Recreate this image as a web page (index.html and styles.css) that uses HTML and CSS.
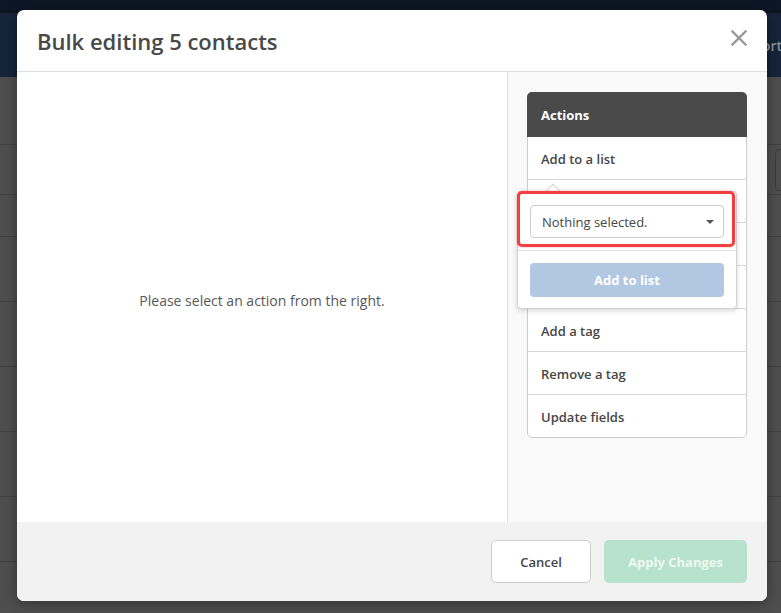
FILE: index.html
```html
<!DOCTYPE html>
<html lang="en">
<head>
<meta charset="utf-8">
<title>Bulk editing 5 contacts</title>
<link rel="stylesheet" href="styles.css">
</head>
<body>
<div class="app">
  <div class="topstrip"></div>
  <div class="topbar"><span class="top-btn">Export</span></div>
  <div class="bg-row h68"></div>
  <div class="bg-row h50"><span class="bg-input"></span></div>
  <div class="bg-row h42"></div>
  <div class="bg-row"></div>
  <div class="bg-row"></div>
  <div class="bg-row"></div>
  <div class="bg-row"></div>
  <div class="bg-row"></div>
</div>

<div class="modal">
  <div class="modal-header">
    <h1 class="modal-title">Bulk editing 5 contacts</h1>
    <button class="close" aria-label="Close">
      <svg width="16" height="16" viewBox="0 0 16 16"><path d="M1.5 1.5 L14.5 14.5 M14.5 1.5 L1.5 14.5" stroke="#9a9a9a" stroke-width="2.4" stroke-linecap="square" fill="none"/></svg>
    </button>
  </div>
  <div class="modal-body">
    <div class="main-pane">
      <p class="hint">Please select an action from the right.</p>
    </div>
    <div class="side-pane">
      <div class="actions">
        <div class="actions-head">Actions</div>
        <div class="action">Add to a list</div>
        <div class="action covered">Remove from a list</div>
        <div class="action covered">Subscribe</div>
        <div class="action covered">Unsubscribe</div>
        <div class="action">Add a tag</div>
        <div class="action">Remove a tag</div>
        <div class="action last">Update fields</div>

        <div class="popover">
          <span class="arrow"></span>
          <div class="pop-section top">
            <div class="select">
              <span>Nothing selected.</span>
              <span class="caret"></span>
            </div>
          </div>
          <div class="pop-section bottom">
            <button class="btn-add">Add to list</button>
          </div>
          <div class="highlight"></div>
        </div>
      </div>
    </div>
  </div>
  <div class="modal-footer">
    <button class="btn btn-cancel">Cancel</button>
    <button class="btn btn-apply">Apply Changes</button>
  </div>
</div>
</body>
</html>
```

FILE: styles.css
```css
html, body {
  margin: 0;
  padding: 0;
  width: 781px;
  height: 613px;
  overflow: hidden;
  background: #4e4e4e;
  font-family: "Open Sans", "Liberation Sans", sans-serif;
}

.app {
  display: flex;
  flex-direction: column;
}

.topstrip {
  height: 13px;
  background: #0d1624;
}

.topbar {
  height: 64px;
  background: #15243a;
  display: flex;
  justify-content: flex-end;
  align-items: center;
  overflow: hidden;
}

.top-btn {
  color: #8b929b;
  font-size: 14px;
  font-weight: 600;
  margin-right: -1px;
  margin-top: 0;
}

.bg-row {
  height: 64px;
  border-bottom: 1px solid #424242;
  display: flex;
  justify-content: flex-end;
  align-items: center;
}

.bg-row.h68 { height: 67px; }
.bg-row.h50 { height: 49px; }
.bg-row.h42 { height: 41px; }

.bg-input {
  width: 40px;
  height: 42px;
  border: 1px solid #3c3c3c;
  border-radius: 4px;
  margin-right: -34px;
  box-sizing: border-box;
}

/* Modal (overlay) */
.modal {
  position: absolute;
  left: 17px;
  top: 10px;
  width: 750px;
  height: 591px;
  background: #fff;
  border-radius: 7px;
  box-shadow: 0 3px 14px rgba(0, 0, 0, 0.35);
  display: flex;
  flex-direction: column;
  overflow: hidden;
}

.modal-header {
  display: flex;
  justify-content: space-between;
  align-items: flex-start;
  padding: 17px 20px 16px 20px;
  border-bottom: 1px solid #dedede;
}

.modal-title {
  margin: 0;
  font-size: 22px;
  line-height: 28px;
  font-weight: 600;
  color: #484848;
}

.close {
  border: 0;
  background: none;
  padding: 0;
  margin-top: 3px;
  width: 16px;
  height: 16px;
  display: block;
}

.close svg { display: block; }

.modal-body {
  flex: 1;
  display: flex;
  min-height: 0;
}

.main-pane {
  flex: 1;
  display: flex;
  align-items: center;
  justify-content: center;
  padding-top: 6px;
}

.hint {
  margin: 0;
  font-size: 14px;
  color: #585858;
}

.side-pane {
  width: 220px;
  border-left: 1px solid #dedede;
  background: #f9f9f9;
  padding: 20px 20px 0 19px;
}

.actions {
  position: relative;
  border: 1px solid #cdcdcd;
  border-radius: 5px;
  background: #fff;
}

.actions-head {
  height: 45px;
  margin: -1px -1px 0 -1px;
  padding: 0 14px;
  background: #4a4a4a;
  color: #fff;
  font-size: 13px;
  font-weight: 700;
  line-height: 46px;
  border-radius: 5px 5px 0 0;
}

.action {
  height: 42px;
  line-height: 44px;
  padding: 0 13px;
  border-bottom: 1px solid #d6d6d6;
  font-size: 13px;
  font-weight: 600;
  color: #464646;
  overflow: hidden;
}

.action.last { border-bottom: 0; }

/* Popover */
.popover {
  position: absolute;
  left: -11px;
  top: 98px;
  width: 218px;
  background: #fff;
  border: 1px solid #d0d0d0;
  border-radius: 4px;
  box-shadow: 0 2px 5px rgba(0, 0, 0, 0.15);
}

.arrow {
  position: absolute;
  left: 29px;
  top: -6px;
  width: 11px;
  height: 11px;
  background: #fff;
  border-left: 1px solid #d0d0d0;
  border-top: 1px solid #d0d0d0;
  transform: rotate(45deg);
}

.pop-section.top {
  position: relative;
  padding: 13px 12px 12px 12px;
  border-bottom: 1px solid #e3e3e3;
  background: #fff;
  border-radius: 4px 4px 0 0;
}

.pop-section.bottom {
  padding: 12px 12px 11px 12px;
}

.select {
  height: 31px;
  border: 1px solid #cccccc;
  border-radius: 4px;
  display: flex;
  align-items: center;
  justify-content: space-between;
  padding: 0 9px 0 11px;
  font-size: 13px;
  color: #454545;
}

.caret {
  width: 0;
  height: 0;
  border-left: 4px solid transparent;
  border-right: 4px solid transparent;
  border-top: 4px solid #555;
}

.btn-add {
  display: block;
  width: 100%;
  height: 34px;
  border: 0;
  border-radius: 4px;
  background: #b2c7e1;
  color: #fff;
  font-family: inherit;
  font-size: 13px;
  font-weight: 700;
}

.highlight {
  position: absolute;
  left: -1px;
  top: -1px;
  width: 212px;
  height: 50px;
  border: 3px solid #f1403f;
  border-radius: 5px;
  box-shadow: 0 0 2px rgba(241, 64, 63, 0.5);
}

/* Footer */
.modal-footer {
  height: 79px;
  background: #f2f2f2;
  display: flex;
  justify-content: flex-end;
  align-items: center;
  gap: 13px;
  padding: 0 20px;
}

.btn {
  height: 43px;
  border-radius: 5px;
  font-family: inherit;
  font-size: 13px;
  font-weight: 600;
  padding: 0;
}

.btn-cancel {
  width: 100px;
  background: #fff;
  border: 1px solid #cccccc;
  color: #454545;
}

.btn-apply {
  width: 143px;
  background: #b7e2cd;
  border: 0;
  color: #eef8f3;
  font-weight: 700;
}
```
